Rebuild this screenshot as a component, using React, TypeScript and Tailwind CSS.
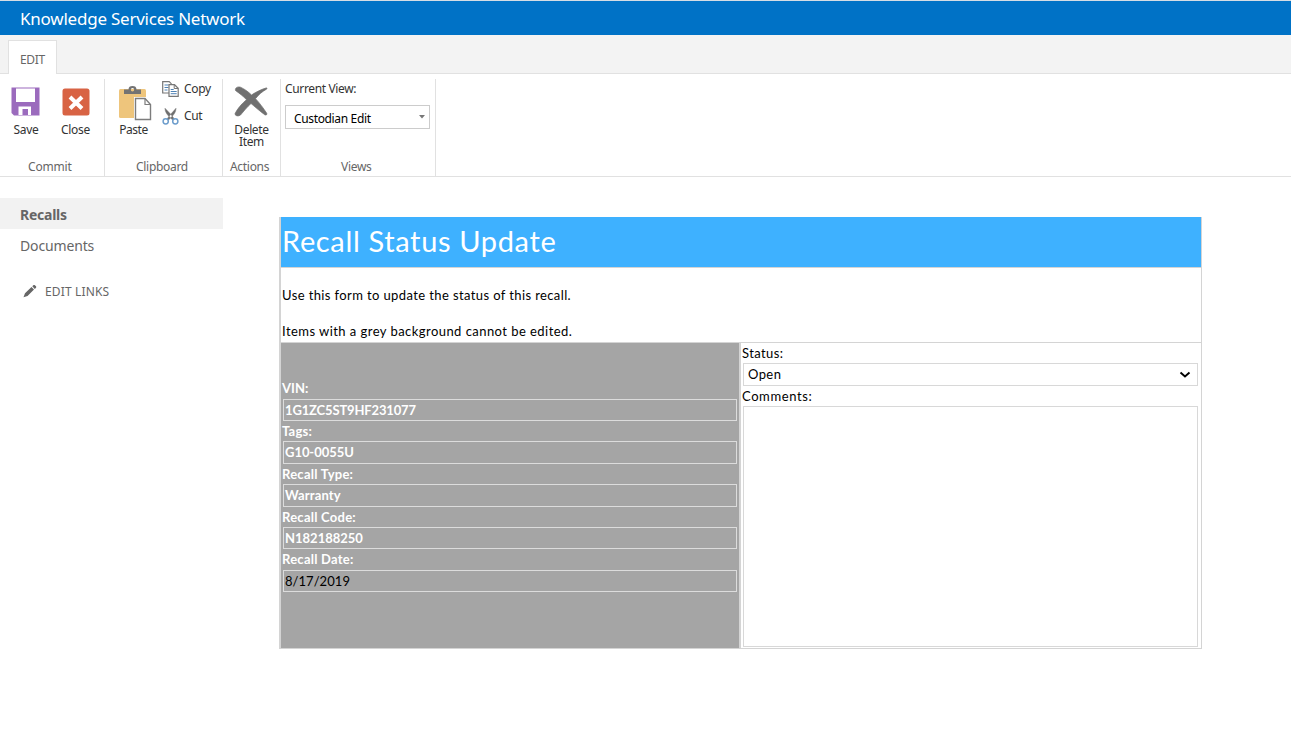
import type { ReactNode } from 'react';

const fields = [
  { label: 'VIN:', value: '1G1ZC5ST9HF231077', labelCls: 'h-[21px] tracking-[0px]', boxCls: 'h-[22px] text-white font-bold', track: 'tracking-[-0.15px]' },
  { label: 'Tags:', value: 'G10-0055U', labelCls: 'h-[20px] tracking-[0.25px]', boxCls: 'h-[23px] text-white font-bold', track: 'tracking-[-0.05px]' },
  { label: 'Recall Type:', value: 'Warranty', labelCls: 'h-[20px] tracking-[0.25px]', boxCls: 'h-[23px] text-white font-bold', track: 'tracking-[0.15px]' },
  { label: 'Recall Code:', value: 'N182188250', labelCls: 'h-[20px] tracking-[0.25px]', boxCls: 'h-[22px] text-white font-bold', track: 'tracking-[0px]' },
  { label: 'Recall Date:', value: '8/17/2019', labelCls: 'h-[21px] tracking-[0.25px]', boxCls: 'h-[22px] text-black', track: 'tracking-[0.05px]' },
];

function SaveIcon() {
  return (
    <svg width="29" height="29" viewBox="0 0 29 29">
      <path fill="#9b6bbd" d="M0.500 0.500h28v28H3L0.500 26z" />
      <path fill="#fff" d="M5 1.500h19V15H5z" />
      <path fill="#fff" d="M7.500 19.500H20V28h-3v-6h-5.500v6h-4z" />
    </svg>
  );
}

function CloseIcon() {
  return (
    <svg width="28" height="28" viewBox="0 0 28 28">
      <rect x="0.500" y="0.500" width="27" height="27" rx="2.500" fill="#d86344" />
      <path d="M8 9 20 20.500M20 9 8 20.500" stroke="#fff" strokeWidth="4" />
    </svg>
  );
}

function PasteIcon() {
  return (
    <svg width="34" height="36" viewBox="0 0 34 36">
      <rect x="1" y="4" width="27" height="29" rx="1.500" fill="#eec57c" />
      <path fill="#737373" fillRule="evenodd" d="M6 9V4.500h4.500C10.500 2 12 1 14.500 1s4 1 4 3.500H23V9zM14.500 3a1.700 1.700 0 1 0 0 3.400 1.700 1.700 0 0 0 0-3.400z" />
      <path d="M17.500 13.500h9.500l5.500 6V35h-15z" fill="#fff" stroke="#fff" strokeWidth="3" />
      <path d="M17.500 13.500h9.500l5.500 6V34.500h-15z" fill="#fff" stroke="#7d7d7d" strokeWidth="1.400" />
      <path d="M27 13.500v6h5.500" fill="none" stroke="#7d7d7d" strokeWidth="1.200" />
    </svg>
  );
}

function CopyIcon() {
  return (
    <svg width="17" height="16" viewBox="0 0 17 16">
      <path d="M0.700 0.700h6.500l2 2V12h-8.500z" fill="#fff" stroke="#777" strokeWidth="1.200" />
      <path d="M2.500 4h4M2.500 6.500h4M2.500 9h3" stroke="#4f82b5" />
      <path d="M7 3.700h5.500l3.700 3.600v8H7z" fill="#fff" stroke="#777" strokeWidth="1.200" />
      <path d="M12.200 4v3.500h4" fill="none" stroke="#777" />
      <path d="M8.700 8.500h3M8.700 10.500h6M8.700 12.700h6" stroke="#4f82b5" />
    </svg>
  );
}

function CutIcon() {
  return (
    <svg width="17" height="17" viewBox="0 0 17 17">
      <path fill="#6e6e6e" stroke="#6e6e6e" strokeWidth="0.500" d="M3 0.300 9 6.500l4.500 6-1.800.500L7.500 9C5 6.500 3 4 3 .300zM14 0.300 8.500 6.500 4 12.200l1.500.800L9.500 9C12 6.500 14 4 14 .300z" />
      <circle cx="3.700" cy="13.300" r="2.600" fill="#fff" stroke="#6d9dcc" strokeWidth="1.500" />
      <circle cx="13.300" cy="13.300" r="2.600" fill="#fff" stroke="#6d9dcc" strokeWidth="1.500" />
    </svg>
  );
}

function DeleteIcon() {
  return (
    <svg width="34" height="31" viewBox="0 0 34 31">
      <path fill="#707070" stroke="#707070" strokeWidth="0.700" d="M1.500 4.500C.800 1.500 4 .400 6.500 1.200 11 3.200 14.500 6 17.500 9 22 6 27 3.500 32 2c1.200-.300 1.300.600.500 1.200-4.500 2.500-8 5.500-11 9.500 4.300 4.500 7.500 9 11.200 14.500.700 1.300-.600 2.300-1.900 1.600C26 25.500 22 21.500 17 17.500c-4 3.500-7 7.500-10.500 11.500-2 1.500-5.500 1.200-5.500-1.200C3 23 8 17.500 12.500 13.700 9 10 5.500 7.500 1.500 4.500z" />
    </svg>
  );
}

function PencilIcon() {
  return (
    <svg width="14" height="14" viewBox="0 0 14 14">
      <path fill="#666" d="M0.500 12.300 2 8.300 8.500 2l2.500 2.500-6.500 6.500zM9.300 1.300l1-1c.700-.500 1.300-.300 1.800.100l.700.700c.6.600.6 1.200 0 1.800l-1 1z" />
    </svg>
  );
}

function Group({ name, className, nameClass, children }: { name: string; className: string; nameClass: string; children: ReactNode }) {
  return (
    <section className={`flex h-[97px] shrink-0 flex-col justify-between border-r border-[#e1e1e1] ${className}`}>
      <div className="flex">{children}</div>
      <div className={`mb-px h-[17px] text-[12px] leading-[17px] text-[#666] ${nameClass}`}>{name}</div>
    </section>
  );
}

export default function App() {
  return (
    <div className="h-[743px] w-[1291px] overflow-hidden bg-white font-['Noto_Sans',sans-serif] text-[12px] text-[#333]">
      <header className="h-[35px] border-t border-[#d5dde5] bg-[#0072c6] pl-[20px] text-[17px] leading-[35px] text-white">
        <span className="tracking-[-0.23px]">Knowledge Services Network</span>
      </header>
      <div className="flex h-[39px] items-end border-b border-[#e1e1e1] bg-[#f3f3f3] pl-[8px]">
        <div className="-mb-px h-[34px] w-[49px] border border-b-0 border-[#e1e1e1] bg-white text-center leading-[37px] tracking-[-0.3px] text-[#666]">EDIT</div>
      </div>

      <div className="flex h-[103px] border-b border-[#e1e1e1] pt-[5px]">
        <Group name="Commit" className="w-[105px]" nameClass="pl-[28px] tracking-[-0.2px]">
          <div className="flex w-[51px] flex-col items-center pt-[8px]">
            <SaveIcon />
            <span className="ml-px mt-[6px] leading-[16px] tracking-[-0.3px]">Save</span>
          </div>
          <div className="flex w-[49px] flex-col items-center pt-[9px]">
            <CloseIcon />
            <span className="mt-[6px] leading-[16px] tracking-[-0.3px]">Close</span>
          </div>
        </Group>
        <Group name="Clipboard" className="w-[118px]" nameClass="pl-[31px] tracking-[-0.3px]">
          <div className="flex w-[57px] flex-col items-center pt-[6px]">
            <div className="pl-[3px]"><PasteIcon /></div>
            <span className="mt-px leading-[16px] tracking-[-0.45px]">Paste</span>
          </div>
          <div className="flex flex-col gap-[10px] pt-[2px]">
            <div className="flex h-[16px] items-center gap-[5px] leading-[16px] tracking-[-0.3px]"><CopyIcon />Copy</div>
            <div className="flex h-[18px] items-center gap-[5px] leading-[16px] tracking-[-0.4px]"><CutIcon />Cut</div>
          </div>
        </Group>
        <Group name="Actions" className="w-[58px]" nameClass="pl-[7px] tracking-[-0.3px]">
          <div className="flex w-[57px] flex-col items-center pt-[7px] text-center">
            <div className="pr-px"><DeleteIcon /></div>
            <span className="mt-[7px] leading-[12px] tracking-[-0.35px]">Delete<br />Item</span>
          </div>
        </Group>
        <Group name="Views" className="w-[155px]" nameClass="pl-[60px] tracking-[-0.3px]">
          <div className="pl-[4px] pt-[2px]">
            <div className="h-[24px] leading-[16px] tracking-[-0.35px]">Current View:</div>
            <div className="flex h-[24px] w-[145px] items-center justify-between border border-[#ccc] pl-[8px] pr-[4px] text-black">
              <span className="pt-[3px] tracking-[-0.35px]">Custodian Edit</span>
              <svg width="6" height="4" viewBox="0 0 6 4"><path d="M0 0h6L3 3.500z" fill="#777" /></svg>
            </div>
          </div>
        </Group>
      </div>

      <div className="flex items-start">
        <nav className="w-[279px] pt-[21px] text-[14px] text-[#666]">
          <div className="h-[31px] w-[223px] bg-[#f2f2f2] pl-[20px] font-bold leading-[33px]"><span className="tracking-[-0.25px]">Recalls</span></div>
          <div className="h-[31px] pl-[20px] leading-[33px]"><span className="tracking-[-0.15px]">Documents</span></div>
          <div className="mt-[22px] flex h-[20px] items-center gap-[8px] pl-[23px] text-[12px]">
            <PencilIcon />
            <span className="tracking-[0.15px]">EDIT LINKS</span>
          </div>
        </nav>

        <main className="mt-[40px] w-[923px] border-b border-l-2 border-[#d4d4d4] font-['Lato',sans-serif] text-[13px] text-black">
          <h1 className="h-[51px] border-b border-r border-[#d4d4d4] bg-[#3eb1ff] pl-px text-[29px] leading-[48px] text-white">
            <span className="tracking-[0.65px]">Recall Status Update</span>
          </h1>
          <div className="h-[75px] border-b border-r border-[#d4d4d4] pl-px pt-[18px] leading-[18px]">
            <p className="tracking-[0.39px]">Use this form to update the status of this recall.</p>
            <p className="mt-[18px] tracking-[0.45px]">Items with a grey background cannot be edited.</p>
          </div>
          <div className="flex h-[305px]">
            <div className="w-[460px] border-r-2 border-[#d4d4d4] bg-[#a5a5a5] pl-px pr-[2px] pt-[35px]">
              {fields.map((f) => (
                <div key={f.label}>
                  <div className={`font-bold leading-[20px] text-white ${f.labelCls}`}>{f.label}</div>
                  <div className={`ml-px flex items-center border border-[#dcdcdc] pl-px pt-px ${f.boxCls}`}>
                    <span className={f.track}>{f.value}</span>
                  </div>
                </div>
              ))}
            </div>
            <div className="w-[461px] border-r border-[#d4d4d4] pl-px pr-[3px]">
              <div className="h-[20px] leading-[20px] tracking-[0.4px]">Status:</div>
              <div className="ml-px flex h-[23px] items-center justify-between border border-[#d8d8d8] pl-[4px] pr-[6px]">
                <span className="tracking-[0.4px]">Open</span>
                <svg width="12" height="8" viewBox="0 0 12 8"><path d="m1.500 1.500 4.500 4 4.500-4" fill="none" stroke="#000" strokeWidth="1.900" /></svg>
              </div>
              <div className="h-[20px] leading-[20px] tracking-[0.6px]">Comments:</div>
              <div className="ml-px h-[241px] border border-[#d8d8d8]" />
            </div>
          </div>
        </main>
      </div>
    </div>
  );
}
